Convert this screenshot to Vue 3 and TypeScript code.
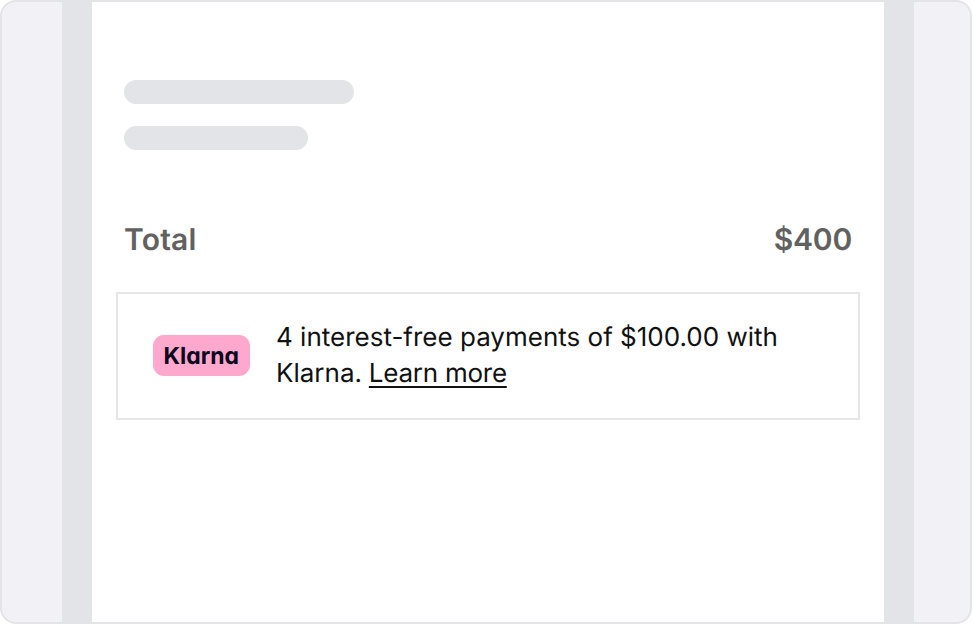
<script setup lang="ts">
const total: string = '$400'
const installment: string = '$100.00'
</script>

<template>
  <div class="frame">
    <main class="page">
      <div class="skeleton">
        <span class="bar bar-long"></span>
        <span class="bar bar-short"></span>
      </div>
      <div class="total">
        <span>Total</span>
        <span class="amount">{{ total }}</span>
      </div>
      <section class="offer">
        <span class="badge">
          <svg width="97" height="41" viewBox="0 0 97 41">
            <text class="wordmark" x="10.5" y="29" textLength="75.5" lengthAdjust="spacingAndGlyphs">Klarna</text>
          </svg>
        </span>
        <p class="message">
          4 interest-free payments of {{ installment }} with<br />
          Klarna. <a class="link">Learn more</a>
        </p>
      </section>
    </main>
  </div>
</template>

<style>
body {
  margin: 0;
  background: #fff;
}
</style>

<style scoped>
.frame {
  box-sizing: border-box;
  width: 972px;
  height: 624px;
  display: flex;
  justify-content: center;
  padding-left: 4px;
  border: 2px solid #e3e4e8;
  border-radius: 16px;
  overflow: hidden;
  background: #f2f1f6;
  font-family: Inter, 'Liberation Sans', sans-serif;
}
.page {
  box-sizing: border-box;
  width: 852px;
  height: 620px;
  padding: 78px 24px 0;
  border: solid #e3e4e8;
  border-width: 0 30px;
  background: #fff;
}
.skeleton {
  display: flex;
  flex-direction: column;
  gap: 22px;
  padding-left: 8px;
}
.bar {
  height: 24px;
  border-radius: 12px;
  background: #e3e4e8;
}
.bar-long {
  width: 230px;
}
.bar-short {
  width: 184px;
}
.total {
  display: flex;
  justify-content: space-between;
  margin-top: 70px;
  padding: 0 8px;
  font-size: 30px;
  line-height: 40px;
  font-weight: 600;
  letter-spacing: 0.2px;
  text-rendering: geometricPrecision;
  color: #616161;
}
.amount {
  letter-spacing: -0.2px;
}
.offer {
  box-sizing: border-box;
  display: flex;
  align-items: flex-start;
  height: 128px;
  margin-top: 32px;
  padding: 26px 0 0 35px;
  border: 2px solid #e6e6e6;
}
.badge {
  display: flex;
  width: 97px;
  height: 41px;
  margin-top: 15px;
  border-radius: 11px;
  background: #ffa8cd;
}
.wordmark {
  font-size: 23.5px;
  font-weight: 700;
  font-feature-settings: 'cv11';
  text-rendering: geometricPrecision;
  fill: #0b051d;
}
.message {
  margin: 0 0 0 26px;
  font-size: 26px;
  line-height: 36px;
  letter-spacing: 0;
  text-rendering: geometricPrecision;
  color: #111;
}
.link {
  margin-left: -0.5px;
  letter-spacing: -0.25px;
  text-decoration: underline;
  text-decoration-thickness: 1.5px;
  text-underline-offset: 4px;
  text-decoration-skip-ink: none;
}
</style>
